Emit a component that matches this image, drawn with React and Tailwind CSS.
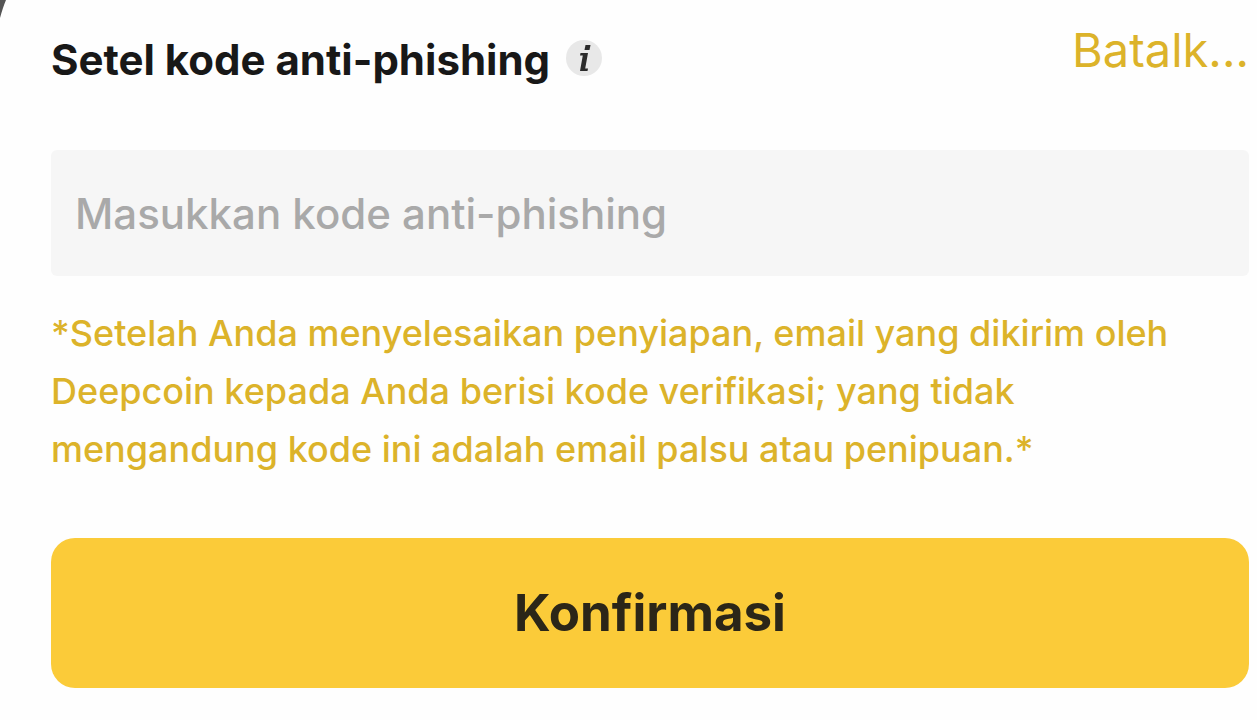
export default function App() {
  return (
    <main className="relative min-h-screen bg-[#fefefe] pt-5 pr-2 pb-8 pl-[51px] font-['Inter','Liberation_Sans',sans-serif]">
      <svg className="absolute top-0 left-0 h-5 w-2" viewBox="0 0 8 20" aria-hidden="true">
        <path d="M0 0H6Q3 7 0 18Z" fill="#555" />
      </svg>
      <form onSubmit={(e) => e.preventDefault()}>
        <header className="flex items-start justify-between">
          <div className="flex items-center gap-4 pt-4">
            <h1 className="text-[42px] leading-12 font-bold whitespace-nowrap text-[#181818]">
              <label htmlFor="code">Setel kode anti-phishing</label>
            </h1>
            <button type="button" aria-label="Info" className="-mt-1 flex size-9 items-center justify-center rounded-full bg-[#e8e8e8]">
              <svg viewBox="0 0 36 36" className="size-9" fill="#2b2b2b" aria-hidden="true">
                <path d="M19.5 5h5l-1 5h-5z" />
                <path d="M14.5 13h7.500l-2.800 15.500h2.800l-.5 2.500h-7.500l2.800-15.500h-2.800z" />
              </svg>
            </button>
          </div>
          <button type="button" className="text-[47px] leading-15 whitespace-nowrap text-[#dcb32a]">
            Batalk...
          </button>
        </header>
        <input
          id="code"
          type="text"
          placeholder="Masukkan kode anti-phishing"
          className="mt-[66px] block h-[126px] w-full rounded-md bg-[#f6f6f6] px-6 text-[42px] font-medium text-[#181818] outline-none placeholder:text-[#a9a9a9]"
        />
        <p className="mt-7 max-w-[1160px] text-[36px] leading-[58px] font-medium text-[#dcb32a]">
          *Setelah Anda menyelesaikan penyiapan, email yang dikirim oleh Deepcoin kepada Anda berisi kode verifikasi; yang tidak mengandung kode ini adalah email palsu atau penipuan.*
        </p>
        <button type="submit" className="mt-15 block h-[150px] w-full rounded-3xl bg-[#fbcb39] text-[51px] font-bold text-[#2b2618]">
          Konfirmasi
        </button>
      </form>
    </main>
  );
}
